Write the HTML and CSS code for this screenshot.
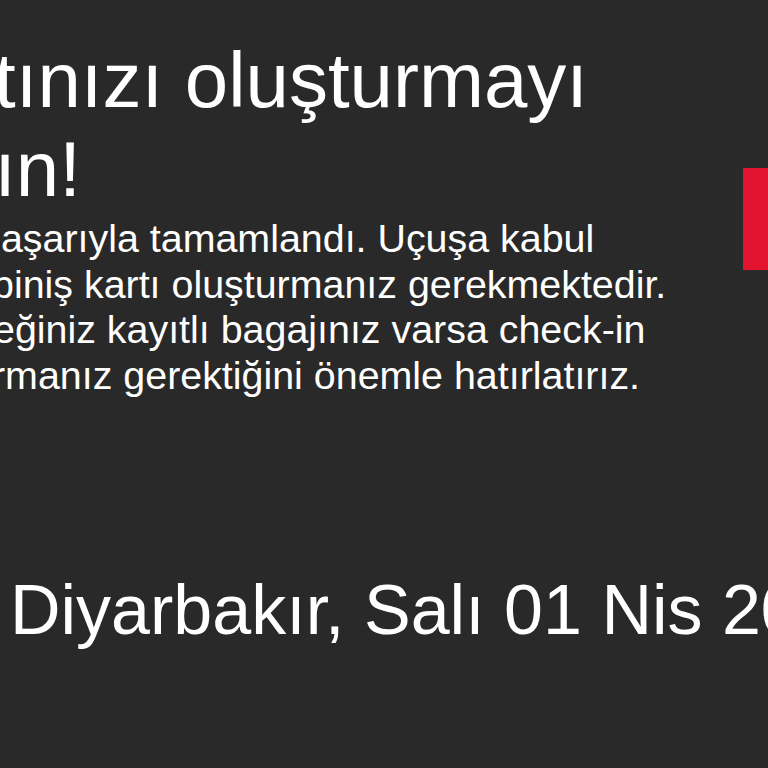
FILE: index.html
```html
<!DOCTYPE html>
<html lang="tr">
<head>
<meta charset="utf-8">
<title>Check-in</title>
<link rel="stylesheet" href="styles.css">
</head>
<body>
<main class="page">
  <section class="top">
    <div class="text">
      <h1 class="title">Biniş kartınızı oluşturmayı unutmayın!</h1>
      <p class="info">
        <span class="line l1">başarıyla tamamlandı. Uçuşa kabul</span>
        <span class="line l2">biniş kartı oluşturmanız gerekmektedir.</span>
        <span class="line l3">eğiniz kayıtlı bagajınız varsa check-in</span>
        <span class="line l4">rmanız gerektiğini önemle hatırlatırız.</span>
      </p>
    </div>
    <div class="cta"></div>
  </section>
  <p class="route">Diyarbakır, Salı 01 Nis 2025</p>
</main>
</body>
</html>
```

FILE: styles.css
```css
html, body {
  margin: 0;
  padding: 0;
  background: #292929;
  overflow: hidden;
  width: 768px;
  height: 768px;
}
body {
  font-family: "Liberation Sans", Arial, sans-serif;
  color: #ffffff;
}
.page {
  padding-top: 36px;
}
.top {
  display: flex;
  align-items: flex-start;
}
.text {
  flex: 0 0 743px;
  min-width: 0;
}
.title {
  margin: 0 0 0 -305px;
  width: 1000px;
  font-size: 78px;
  line-height: 89px;
  font-weight: 400;
}
.info {
  margin: 2px 0 0 0;
  font-size: 39.4px;
  line-height: 45.5px;
  white-space: nowrap;
}
.line {
  display: block;
}
.l1 { margin-left: -21px; }
.l2 { margin-left: -8px; }
.l3 { margin-left: -7px; }
.l4 { margin-left: -8px; }
.cta {
  flex: 0 0 60px;
  height: 102px;
  margin-top: 132px;
  background: #e2132f;
}
.route {
  margin: 172px 0 0 0;
  padding-left: 10px;
  font-size: 70px;
  line-height: 80px;
  white-space: nowrap;
}
```
